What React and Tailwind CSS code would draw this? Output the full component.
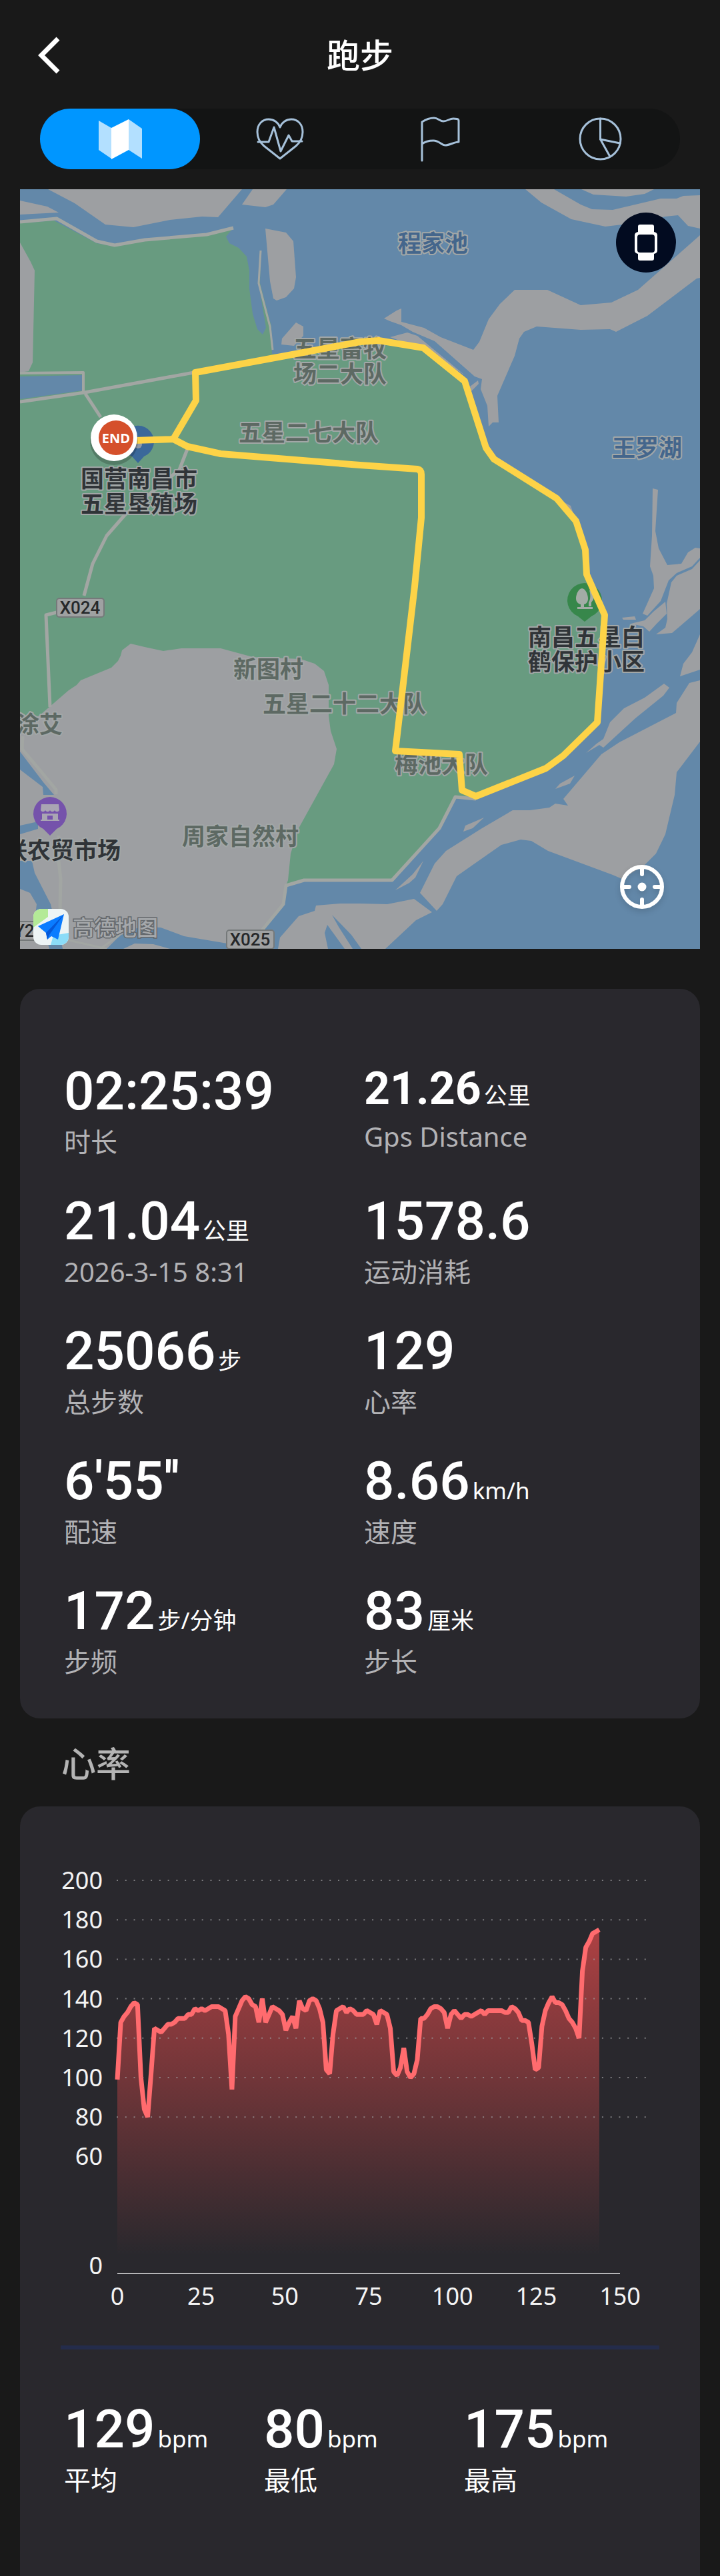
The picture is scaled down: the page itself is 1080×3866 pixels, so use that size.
import { useState } from 'react';

const heartRates = [
  99, 128, 131, 133, 136, 138, 137, 100, 84, 80, 102, 125, 124, 123, 125, 127, 127, 128, 130, 130,
  130, 132, 132, 135, 134, 135, 134, 135, 136, 136, 136, 135, 134, 122, 94, 131, 135, 139, 141, 140,
  137, 136, 128, 140, 128, 132, 136, 135, 134, 132, 124, 128, 131, 125, 139, 135, 134, 139, 140, 139,
  135, 128, 104, 102, 122, 134, 135, 136, 133, 135, 134, 132, 132, 132, 134, 133, 132, 127, 134, 133,
  132, 125, 103, 101, 105, 115, 103, 100, 102, 109, 130, 130, 132, 135, 136, 136, 135, 133, 125, 132,
  134, 132, 130, 132, 132, 131, 132, 133, 134, 132, 134, 134, 134, 134, 134, 133, 133, 136, 135, 133,
  129, 129, 128, 117, 104, 105, 126, 134, 138, 141, 138, 138, 137, 134, 130, 128, 125, 120, 154, 166,
  169, 173, 174, 175,
];

const stats = [
  { value: '02:25:39', label: '时长' },
  { value: '21.26', unit: '公里', label: 'Gps Distance', compact: true },
  { value: '21.04', unit: '公里', label: '2026-3-15 8:31' },
  { value: '1578.6', label: '运动消耗' },
  { value: '25066', unit: '步', label: '总步数' },
  { value: '129', label: '心率' },
  { value: "6'55''", label: '配速' },
  { value: '8.66', unit: 'km/h', label: '速度' },
  { value: '172', unit: '步/分钟', label: '步频' },
  { value: '83', unit: '厘米', label: '步长' },
];

const heartStats = [
  { value: '129', unit: 'bpm', label: '平均' },
  { value: '80', unit: 'bpm', label: '最低' },
  { value: '175', unit: 'bpm', label: '最高' },
];

function MapIcon() {
  return (
    <svg viewBox="0 0 65 60" className="w-[65px] h-[60px]" fill="currentColor">
      <path d="M0 2L19 13V59L0 46ZM45 0L65 14V59L45 46Z" opacity="0.7" />
      <path d="M19 13L45 0V46L19 60Z" />
    </svg>
  );
}

function HeartIcon() {
  return (
    <svg viewBox="0 0 72 64" className="w-[72px] h-16" fill="none" stroke="currentColor" strokeWidth="3" strokeLinejoin="round" strokeLinecap="round">
      <path d="M36 14C33 6 26 2 19 2C9 2 2 10 2 21C2 30 6 37 12 42L36 61L60 42C66 37 70 30 70 21C70 10 63 2 53 2C46 2 39 6 36 14Z" />
      <path d="M3 36H19L27 14L37 50L49 26L54 35H69" />
    </svg>
  );
}

function FlagIcon() {
  return (
    <svg viewBox="0 0 59 68" className="w-[59px] h-[68px]" fill="none" stroke="currentColor" strokeWidth="3" strokeLinejoin="round" strokeLinecap="round">
      <path d="M2 66V8C8 4 14 2 20 2C26 2 29 7 34 7C40 7 43 3 49 3C53 3 57 3 57 6V38C51 38 43 43 37 43C31 43 28 36 19 36C12 36 6 38 2 41" />
    </svg>
  );
}

function PieIcon() {
  return (
    <svg viewBox="0 0 65 65" className="w-[65px] h-[65px]" fill="none" stroke="currentColor" strokeWidth="3" strokeLinecap="round">
      <circle cx="32.5" cy="32.5" r="30.5" />
      <path d="M32.5 2V33L62 39M32.5 33L47 59" />
    </svg>
  );
}

const tabs = [
  { id: 'map', name: '地图', Icon: MapIcon },
  { id: 'heart', name: '心率', Icon: HeartIcon },
  { id: 'flag', name: '分段', Icon: FlagIcon },
  { id: 'pie', name: '统计', Icon: PieIcon },
];

// land, sand banks and islands that lie on the water
const landShapes = [
  'M42 0L82 21L128 53L170 57L225 46L273 41L297 42L333 0Z',
  'M0 17L41 26L58 35L0 38Z',
  'M349 0L333 23L368 27L380 23L400 0Z',
  'M368 59L399 65L410 78L414 132L411 149L399 162L385 167L380 164L375 138Z',
  'M414 200L425 206V220L411 235L392 233L393 224Z',
  'M758 0L782 20L827 45L878 56L903 53L968 41L987 39L1002 55L1020 59V9L995 10L985 14L961 14L889 31L858 30L841 23L801 0Z',
  'M842 0L860 8L909 11L937 7L951 0Z',
  'M1020 69L927 151L887 170L841 174L791 151H742L720 172L703 195L689 229L680 241L631 222L606 208L572 199V179L565 182L546 194L555 198L572 204L589 214L622 228L682 281L693 285L691 300L701 325L703 356L709 350L718 350L716 310L742 250L749 224L756 214L775 206L841 211L885 210L894 214L941 190L1015 134L1020 133Z',
  'M555 222L581 215L596 220L667 279L605 240Z',
  'M675 296L687 287L688 292L677 303Z',
  'M805 464L826 475L834 498Z',
  'M949 449L957 451L953 513L958 539L971 564L992 562L1002 545L1013 538L1020 539V553L1008 566L985 576L973 587L961 618L941 640L934 637L951 599L950 580L945 566L948 520Z',
  'M1020 557L1008 570L985 580L977 590L970 622L971 645L968 658L954 668L978 666L1020 630Z',
  'M968 619L970 637L955 652L944 664L935 656L916 652L937 647L950 634Z',
  'M903 643L922 641L924 646L905 646Z',
  'M1020 668L1008 695L995 712L990 731L1020 721Z',
  'M849 846L865 832L875 825L885 800L906 779L937 763L966 742L974 748L965 760L923 794L875 838L869 834Z',
  'M803 900L810 892L832 880L825 892Z',
  'M665 964L668 955L696 943L679 959Z',
  'M563 1052L589 1028L605 1008L593 1033L584 1041Z',
  'M600 1056L622 1012L639 993L693 959L739 932H765L794 928L803 922L822 925L815 915L872 848L899 830L984 786L985 771L1004 741L1020 737V829L985 875L982 909L968 968L954 997L937 1014L903 1035L889 1029L792 993L767 978L751 976L722 984L682 1012L655 1031L634 1073L625 1083Z',
  'M444 1075L480 1072L510 1072L551 1073L591 1065L618 1085L594 1097L548 1140H387L390 1123L418 1091L442 1083Z',
];

const route =
  'M172 377L230 375L264 317L263 275L414 247L510 229L538 227L605 238L667 288L699 388L711 405L805 464L834 498L848 541L850 578L877 639L866 800L815 850L789 869L684 911L663 902L659 848L563 843L592 596L602 493V428Q602 421 596 420L510 414L301 397L251 386L230 375';

const placeNames = [
  { x: 567, y: 94, text: '程家池', tone: 'water' },
  { x: 888, y: 401, text: '王罗湖', tone: 'water' },
  { x: 410, y: 252, text: '五星畜牧', tone: 'village' },
  { x: 410, y: 290, text: '场二大队', tone: 'village' },
  { x: 328, y: 378, text: '五星二七大队', tone: 'village' },
  { x: 320, y: 733, text: '新图村', tone: 'village' },
  { x: 364, y: 785, text: '五星二十二大队', tone: 'village' },
  { x: 562, y: 876, text: '梅池大队', tone: 'village' },
  { x: 243, y: 984, text: '周家自然村', tone: 'village' },
  { x: -6, y: 816, text: '涂艾', tone: 'village' },
  { x: 91, y: 447, text: '国营南昌市', tone: 'poi' },
  { x: 91, y: 485, text: '五星垦殖场', tone: 'poi' },
  { x: 762, y: 685, text: '南昌五星白', tone: 'poi' },
  { x: 762, y: 722, text: '鹤保护小区', tone: 'poi' },
  { x: -24, y: 1005, text: '联农贸市场', tone: 'poi' },
];

const toneFill = { water: '#44668c', village: '#5d6963', poi: '#303438' };

function RoadSign({ x, y, text }) {
  return (
    <g>
      <rect x={x} y={y} width="71" height="28" rx="4" fill="#9fa1a2" stroke="#75797a" strokeWidth="2" />
      <text x={x + 35} y={y + 23} textAnchor="middle" fill="#26282a" className="font-['Roboto',sans-serif] text-[26px] font-medium">
        {text}
      </text>
    </g>
  );
}

function RouteMap() {
  return (
    <section aria-label="轨迹地图" className="relative mt-[30px]">
      <svg viewBox="0 0 1020 1140" className="w-full bg-[#6388a9]">
        <path
          fill="#689b80"
          d="M0 51L51 47L115 81L142 86L187 77L280 69L320 58L309 71L314 81L328 88L340 101L344 122L344 149L349 187L356 210L364 218L369 208L358 141L361 92L360 141L377 206L378 247L414 247L538 227L605 238L667 288L699 388L711 405L805 464L834 498L848 541L850 578L877 639L866 800L815 850L789 869L684 911L653 913L629 959L558 1038H426L399 1045L300 1080H0Z"
        />
        {/* farmland south west of the lake */}
        <path
          fill="#9d9fa2"
          d="M166 682L153 692L151 700L147 708L137 718L91 737L85 744L73 752L29 790L0 800V1140H130L150 1120L180 1107L211 1108L246 1121L311 1132L320 1140H345L364 1112L395 1073L399 1045L402 1037L406 997L418 959L471 863L475 840L466 813L463 790V744L456 723L442 712L421 705L349 702L301 689H242L215 693L187 687Z"
        />
        <g fill="#9d9fa2">
          {landShapes.map((d) => (
            <path key={d} d={d} />
          ))}
          <path d="M0 80L16 109L22 122L19 260L13 273L0 275Z" />
          <path d="M155 1140L172 1132L200 1133L225 1140Z" />
        </g>
        <g fill="#6388a9">
          <path d="M0 281L93 279L94 302L0 315Z" />
          <path d="M0 844L35 890L51 909H35L34 897L0 871Z" />
          <path d="M0 955L27 949V960L0 968Z" />
          <path d="M0 1008H18L22 1026L46 1073L50 1090H23L25 1073L15 1056L0 1050Z" />
          <path d="M42 1132L62 1130L64 1140H44Z" />
          <path d="M468 1089L497 1119L512 1140H499L478 1107Z" />
          <path d="M461 1104L487 1140H462L457 1116Z" />
        </g>
        <g fill="none" stroke="#a2a6a3" strokeWidth="5" strokeLinejoin="round">
          <path d="M0 49L55 44L115 78L142 84L187 76L280 68L320 58" />
          <path d="M361 92L358 141L375 206L379 241" strokeWidth="3" />
          <path d="M0 276L95 275V303" strokeWidth="4" />
          <path d="M0 319L97 305L261 275" />
          <path d="M98 307L121 342" />
          <path d="M251 390L239 421L190 461L158 488L130 520L109 562L96 610" />
          <path d="M55 635L39 639L45 777" />
          <path d="M684 915L653 912L629 959L558 1037H426L399 1045L395 1073L363 1112" />
          <path d="M4 821L3 840L30 872L54 901V908" />
          <path d="M58 970V1008L61 1035L60 1081" />
          <path d="M120 1140L150 1119M0 1128L60 1124L130 1140" strokeWidth="3" />
        </g>

        {/* place pins */}
        <path d="M177 411L168 401A24 24 0 1 1 186 401Z" fill="#3a689a" />
        <circle cx="177" cy="383" r="6" fill="#8f99a6" />
        <g>
          <path d="M847 649L837 641A26 26 0 1 1 857 641Z" fill="#37874b" />
          <path d="M843 599C838 599 834 608 834 614C834 619 837 622 841 623V627H836V630H859V627H846V623C850 622 852 619 852 614C852 608 848 599 843 599ZM854 602C859 602 862 610 860 616L857 620V626H853V620C856 616 856 608 854 602Z" fill="#a3aca6" />
        </g>
        <g>
          <path d="M45 970L35 960A25 25 0 1 1 55 960Z" fill="#7552ab" />
          <path d="M32 923H58L59 932C57 935 54 935 52 932C50 935 47 935 45 932C43 935 40 935 38 932C36 935 33 935 31 932ZM33 937H57V946H59V948H31V946H33ZM41 940V946H49V940Z" fill="#a9a5b3" fillRule="evenodd" />
        </g>

        <g className="font-['Noto_Sans_CJK_SC',sans-serif] text-[35px] font-bold" strokeWidth="4" stroke="#a2a7a7" strokeLinejoin="round">
          {placeNames.map((p) => (
            <text key={p.text} x={p.x} y={p.y} fill={toneFill[p.tone]} className="[paint-order:stroke]">
              {p.text}
            </text>
          ))}
        </g>
        <RoadSign x={55} y={614} text="X024" />
        <RoadSign x={310} y={1112} text="X025" />
        <RoadSign x={-14} y={1099} text="Y206" />

        <path d={route} fill="none" stroke="#fdd347" strokeWidth="10" strokeLinejoin="round" />

        {/* end marker */}
        <circle cx="141" cy="378" r="36" fill="#000" opacity="0.2" />
        <circle cx="141" cy="373" r="35" fill="#fff" />
        <circle cx="144" cy="373" r="26" fill="#d5502b" />
        <text x="144" y="381" textAnchor="middle" fill="#fff" className="font-['Open_Sans',sans-serif] text-[20px] font-bold">
          END
        </text>

        {/* map provider */}
        <g transform="translate(20 1080)">
          <rect width="53" height="54" rx="12" fill="#edf4f5" />
          <path d="M12 0H22V12L0 28V12A12 12 0 0 1 12 0Z" fill="#b4ea97" />
          <path d="M30 40L53 36V42A12 12 0 0 1 41 54H26Z" fill="#8bdcf8" />
          <path d="M7 26L46 8L37 46L27 41L21 46L19 36Z" fill="#0a7cff" />
          <path d="M19 36L46 8L24 39L21 46Z" fill="#0458d8" />
        </g>
        <text x="79" y="1120" fill="#a5a8ab" stroke="#65696d" strokeWidth="3" className="font-['Noto_Sans_CJK_SC',sans-serif] text-[32px] font-medium [paint-order:stroke]">
          高德地图
        </text>
      </svg>

      <button type="button" aria-label="手表" className="absolute top-[35px] right-9 flex size-[90px] items-center justify-center rounded-full bg-[#020b20]">
        <svg viewBox="0 0 34 54" className="w-[34px] h-[54px]">
          <path d="M8 0H26Q29 0 29 3V11Q34 12 34 16V39Q34 43 29 44V51Q29 54 26 54H8Q5 54 5 51V44Q0 43 0 39V16Q0 12 5 11V3Q5 0 8 0Z" fill="#fff" />
          <rect x="4" y="15" width="26" height="27" rx="4" fill="#020b20" />
        </svg>
      </button>
      <button type="button" aria-label="定位" className="absolute right-[54px] bottom-[60px] rounded-full drop-shadow-lg">
        <svg viewBox="0 0 66 66" className="size-[66px]" fill="none" stroke="#fff" strokeWidth="6" strokeLinecap="round">
          <circle cx="33" cy="33" r="30" />
          <path d="M33 4V14M33 52V62M4 33H14M52 33H62" />
          <circle cx="33" cy="33" r="6.5" fill="#fff" stroke="none" />
        </svg>
      </button>
    </section>
  );
}

function Stat({ value, unit, label, compact, bright }) {
  return (
    <div>
      <div className="flex items-baseline gap-1 text-white">
        <span
          className={
            compact
              ? "font-['Roboto',sans-serif] text-[68px] leading-[72px] font-bold"
              : "font-['Roboto',sans-serif] text-[80px] leading-[80px] font-medium"
          }
        >
          {value}
        </span>
        {unit && <span className="text-[35px] leading-[48px]">{unit}</span>}
      </div>
      <div className={bright ? 'mt-3 text-[40px] leading-[48px] text-white' : 'mt-3 text-[40px] leading-[48px] text-[#b2b2b5]'}>
        {label}
      </div>
    </div>
  );
}

function HeartRateChart() {
  const toX = (minute) => 146 + minute * 5.027;
  const toY = (bpm) => 111 + (200 - bpm) * 2.96;
  const step = 143.8 / (heartRates.length - 1);
  const points = heartRates.map((bpm, i) => `${toX(i * step).toFixed(1)},${toY(bpm).toFixed(1)}`);
  const line = 'M' + points.join('L');

  return (
    <svg viewBox="0 0 1020 809" className="w-full" role="img" aria-label="心率曲线">
      <defs>
        <linearGradient id="hrFill" gradientUnits="userSpaceOnUse" x1="0" y1="184" x2="0" y2="674">
          <stop offset="0" stopColor="#ff5050" stopOpacity="0.62" />
          <stop offset="1" stopColor="#ff5050" stopOpacity="0" />
        </linearGradient>
      </defs>
      <path d={`${line}V700H146Z`} fill="url(#hrFill)" />
      {[200, 180, 160, 140, 120, 100, 80].map((v) => (
        <line key={v} x1="145" x2="940" y1={toY(v)} y2={toY(v)} stroke="#a0a0a3" strokeOpacity="0.7" strokeWidth="2" strokeDasharray="2 10.77" />
      ))}
      <path d={line} fill="none" stroke="#ff6b6e" strokeWidth="7" strokeLinejoin="bevel" />
      <line x1="146" x2="900" y1="701" y2="701" stroke="#b5b5b7" strokeWidth="2" />
      <g fill="#f4f4f4" className="text-[36px]">
        {[200, 180, 160, 140, 120, 100, 80, 60].map((v) => (
          <text key={v} x="124" y={toY(v) + 13} textAnchor="end">
            {v}
          </text>
        ))}
        <text x="124" y="702" textAnchor="end">
          0
        </text>
        {[0, 25, 50, 75, 100, 125, 150].map((m) => (
          <text key={m} x={toX(m)} y="748" textAnchor="middle">
            {m}
          </text>
        ))}
      </g>
    </svg>
  );
}

export default function App() {
  const [activeTab, setActiveTab] = useState('map');

  return (
    <div lang="zh-CN" className="bg-[#191919] px-[30px] font-['Noto_Sans','Noto_Sans_CJK_SC',sans-serif]">
      <header className="grid grid-cols-[1fr_auto_1fr] items-center px-[26px] pt-[51px]">
        <button type="button" aria-label="返回" className="w-fit text-white">
          <svg viewBox="0 0 34 56" className="w-[34px] h-14" fill="none" stroke="currentColor" strokeWidth="7">
            <path d="M31 3L6 28L31 53" />
          </svg>
        </button>
        <h1 className="text-[50px] leading-[64px] font-medium text-white">跑步</h1>
      </header>

      <div role="tablist" className="mx-[30px] mt-12 flex h-[91px] rounded-full bg-[#131414]">
        {tabs.map(({ id, name, Icon }) => (
          <button
            key={id}
            type="button"
            role="tab"
            aria-label={name}
            aria-selected={activeTab === id}
            onClick={() => setActiveTab(id)}
            className={
              activeTab === id
                ? 'flex flex-1 items-center justify-center rounded-full bg-[#0096ff] text-white'
                : 'flex flex-1 items-center justify-center rounded-full text-[#a6c1da]'
            }
          >
            <Icon />
          </button>
        ))}
      </div>

      <RouteMap />

      <section className="mt-15 grid grid-cols-2 gap-y-[55px] rounded-[30px] bg-[#29282d] pt-[114px] pr-[54px] pb-[61px] pl-[66px]">
        {stats.map((s) => (
          <Stat key={s.label} {...s} />
        ))}
      </section>

      <h2 className="px-[62px] pt-9 pb-8 text-[52px] leading-[64px] font-medium text-[#b4b4b4]">心率</h2>

      <section className="rounded-t-[30px] bg-[#29282d]">
        <HeartRateChart />
        <hr className="mx-[61px] h-[6px] border-0 bg-[#242c4b]" />
        <div className="grid grid-cols-3 pt-20 pr-[54px] pb-30 pl-[66px]">
          {heartStats.map((s) => (
            <Stat key={s.label} {...s} bright />
          ))}
        </div>
      </section>
    </div>
  );
}
